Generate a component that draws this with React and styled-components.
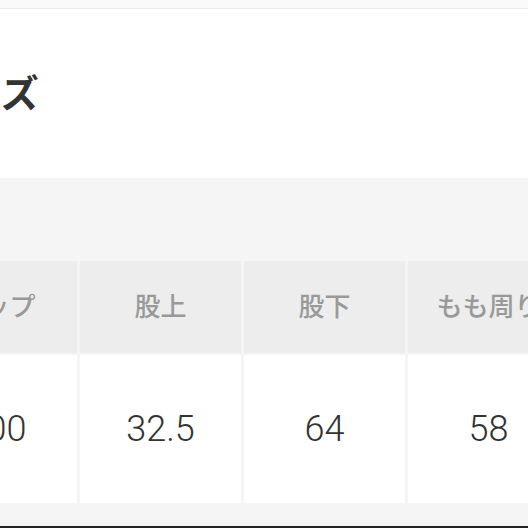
import React from 'react'
import styled, { createGlobalStyle } from 'styled-components'

const Global = createGlobalStyle`
  html, body {
    margin: 0;
    padding: 0;
    background: #ffffff;
    overflow: hidden;
  }
  body {
    font-family: "Noto Sans CJK JP", "Liberation Sans", sans-serif;
  }
`

const Page = styled.div`
  width: 528px;
  height: 528px;
  overflow: hidden;
`

const TopBar = styled.div`
  height: 8px;
  background: #fafafa;
  border-bottom: 1px solid #ececec;
`

const TitleArea = styled.section`
  height: 169px;
  background: #fff;
  overflow: hidden;
`

const Title = styled.h2`
  margin: 62px 0 0 -74px;
  font-family: "Noto Sans CJK JP", sans-serif;
  font-size: 38px;
  line-height: 40px;
  font-weight: 700;
  color: #333;
  white-space: nowrap;
`

const SizeArea = styled.section`
  background: #f5f5f5;
  padding: 83px 0 23px;
  border-bottom: 2px solid #222;
  overflow: hidden;
`

const Table = styled.div`
  display: grid;
  grid-template-columns: repeat(4, 161px);
  grid-template-rows: 92px 148px;
  column-gap: 3px;
  row-gap: 2px;
  margin-left: -84px;
  width: max-content;
`

const Cell = styled.div`
  display: flex;
  align-items: center;
  justify-content: center;
  white-space: nowrap;
  padding-bottom: ${p => (p.$head ? '5px' : '0')};
  background: ${p => (p.$head ? '#ededed' : '#ffffff')};
  color: ${p => (p.$head ? '#999999' : '#333333')};
  font-family: ${p =>
    p.$head ? '"Noto Sans CJK JP", sans-serif' : 'Roboto, "Liberation Sans", sans-serif'};
  font-size: ${p => (p.$head ? '26px' : '36px')};
  font-weight: ${p => (p.$head ? 500 : 300)};
`

const cols = [
  { label: 'ヒップ', value: '100' },
  { label: '股上', value: '32.5' },
  { label: '股下', value: '64' },
  { label: 'もも周り', value: '58' },
]

export default function App() {
  return (
    <Page>
      <Global />
      <TopBar />
      <TitleArea>
        <Title>サイズ</Title>
      </TitleArea>
      <SizeArea>
        <Table>
          {cols.map(c => (
            <Cell $head key={'h' + c.label}>{c.label}</Cell>
          ))}
          {cols.map(c => (
            <Cell key={'v' + c.label}>{c.value}</Cell>
          ))}
        </Table>
      </SizeArea>
    </Page>
  )
}
